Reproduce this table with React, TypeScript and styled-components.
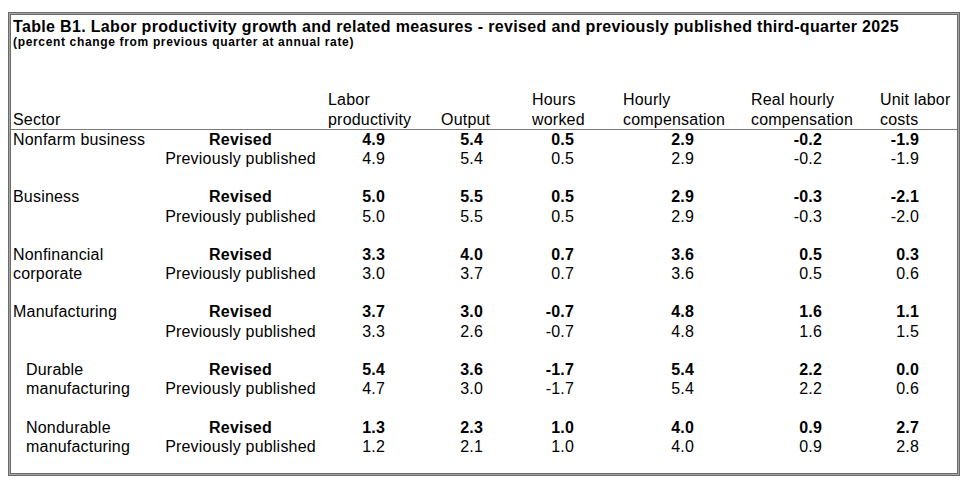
import React from "react";
import styled, { createGlobalStyle } from "styled-components";

const Global = createGlobalStyle`
  html, body { margin: 0; padding: 0; background: #ffffff; }
  body { font-family: "Liberation Sans", Arial, sans-serif; color: #000; }
`;

const ROW = 19.2;

const Frame = styled.div`
  margin: 12px 0 0 8px;
  width: 952px;
  height: 464px;
  box-sizing: border-box;
  border: 3px solid #a3a3a3;
  outline: 1px solid #6b6b6b;
  outline-offset: -1px;
  display: flex;
  flex-direction: column;
`;

const FrameInner = styled.div`
  flex: 1;
  border: 1px solid #6b6b6b;
  margin: -1px;
  display: flex;
  flex-direction: column;
`;

const Title = styled.div`
  font-size: 16px;
  font-weight: bold;
  line-height: 19px;
  letter-spacing: 0.33px;
  padding: 2px 0 0 2px;
  white-space: nowrap;
`;

const Subtitle = styled.div`
  font-size: 12px;
  font-weight: bold;
  line-height: 13px;
  letter-spacing: 0.66px;
  padding-left: 2px;
  white-space: nowrap;
`;

const Grid = styled.div`
  margin-top: 42.4px;
  display: grid;
  grid-template-columns: 142px 175px 113px 91px 91px 128px 129px 77px;
  grid-auto-rows: ${ROW}px;
  font-size: 16px;
  line-height: ${ROW}px;
  letter-spacing: 0.2px;
`;

const HeadCell = styled.div<{ $pl?: number }>`
  grid-row: span 2;
  display: flex;
  flex-direction: column;
  justify-content: flex-end;
  padding-left: ${(p) => p.$pl ?? 0}px;
  border-bottom: 1px solid #7a7a7a;
  white-space: nowrap;
`;

const SectorCell = styled.div<{ $indent?: boolean }>`
  padding-left: ${(p) => (p.$indent ? 15 : 2)}px;
  white-space: nowrap;
`;

const StatusCell = styled.div<{ $bold?: boolean }>`
  text-align: center;
  font-weight: ${(p) => (p.$bold ? "bold" : "normal")};
  white-space: nowrap;
`;

const ValueCell = styled.div<{ $pr: number; $bold?: boolean }>`
  text-align: right;
  padding-right: ${(p) => p.$pr}px;
  font-weight: ${(p) => (p.$bold ? "bold" : "normal")};
`;

const Blank = styled.div`
  grid-column: 1 / -1;
`;

const PADS = [56, 49, 49, 57, 58, 38];

type Group = {
  lines: [string, string];
  indent?: boolean;
  revised: string[];
  prev: string[];
};

const groups: Group[] = [
  {
    lines: ["Nonfarm business", ""],
    revised: ["4.9", "5.4", "0.5", "2.9", "-0.2", "-1.9"],
    prev: ["4.9", "5.4", "0.5", "2.9", "-0.2", "-1.9"],
  },
  {
    lines: ["Business", ""],
    revised: ["5.0", "5.5", "0.5", "2.9", "-0.3", "-2.1"],
    prev: ["5.0", "5.5", "0.5", "2.9", "-0.3", "-2.0"],
  },
  {
    lines: ["Nonfinancial", "corporate"],
    revised: ["3.3", "4.0", "0.7", "3.6", "0.5", "0.3"],
    prev: ["3.0", "3.7", "0.7", "3.6", "0.5", "0.6"],
  },
  {
    lines: ["Manufacturing", ""],
    revised: ["3.7", "3.0", "-0.7", "4.8", "1.6", "1.1"],
    prev: ["3.3", "2.6", "-0.7", "4.8", "1.6", "1.5"],
  },
  {
    lines: ["Durable", "manufacturing"],
    indent: true,
    revised: ["5.4", "3.6", "-1.7", "5.4", "2.2", "0.0"],
    prev: ["4.7", "3.0", "-1.7", "5.4", "2.2", "0.6"],
  },
  {
    lines: ["Nondurable", "manufacturing"],
    indent: true,
    revised: ["1.3", "2.3", "1.0", "4.0", "0.9", "2.7"],
    prev: ["1.2", "2.1", "1.0", "4.0", "0.9", "2.8"],
  },
];

const headers: [string, string][] = [
  ["Labor", "productivity"],
  ["", "Output"],
  ["Hours", "worked"],
  ["Hourly", "compensation"],
  ["Real hourly", "compensation"],
  ["Unit labor", "costs"],
];

export default function App() {
  return (
    <>
      <Global />
      <Frame>
        <FrameInner>
          <Title>
            Table B1. Labor productivity growth and related measures - revised and previously published third-quarter 2025
          </Title>
          <Subtitle>(percent change from previous quarter at annual rate)</Subtitle>
          <Grid>
            <HeadCell $pl={2}>
              <span>Sector</span>
            </HeadCell>
            <HeadCell />
            {headers.map(([a, b], i) => (
              <HeadCell key={i}>
                {a && <span>{a}</span>}
                <span>{b}</span>
              </HeadCell>
            ))}
            {groups.map((g, gi) => (
              <React.Fragment key={gi}>
                <SectorCell $indent={g.indent}>{g.lines[0]}</SectorCell>
                <StatusCell $bold>Revised</StatusCell>
                {g.revised.map((v, i) => (
                  <ValueCell key={i} $pr={PADS[i]} $bold>
                    {v}
                  </ValueCell>
                ))}
                <SectorCell $indent={g.indent}>{g.lines[1]}</SectorCell>
                <StatusCell>Previously published</StatusCell>
                {g.prev.map((v, i) => (
                  <ValueCell key={i} $pr={PADS[i]}>
                    {v}
                  </ValueCell>
                ))}
                {gi < groups.length - 1 && <Blank />}
              </React.Fragment>
            ))}
          </Grid>
        </FrameInner>
      </Frame>
    </>
  );
}
